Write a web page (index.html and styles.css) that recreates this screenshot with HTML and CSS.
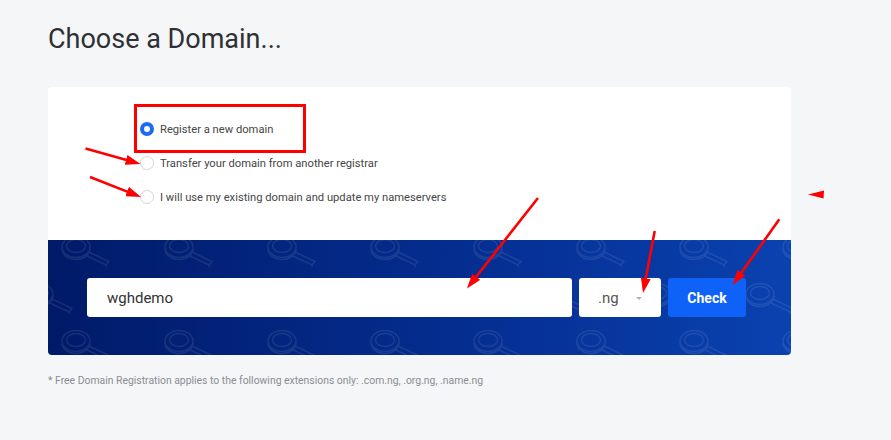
FILE: index.html
```html
<!DOCTYPE html>
<html lang="en">
<head>
    <meta charset="UTF-8">
    <meta name="viewport" content="width=device-width, initial-scale=1.0">
    <title>Choose a Domain</title>
    <link rel="stylesheet" href="styles.css">
</head>
<body>
    <div class="page">
        <h1 class="page-title">Choose a Domain...</h1>

        <div class="domain-card">
            <div class="domain-options">
                <label class="option">
                    <input type="radio" name="domain_option" value="register" checked>
                    Register a new domain
                </label>
                <label class="option">
                    <input type="radio" name="domain_option" value="transfer">
                    Transfer your domain from another registrar
                </label>
                <label class="option">
                    <input type="radio" name="domain_option" value="owndomain">
                    I will use my existing domain and update my nameservers
                </label>
            </div>

            <div class="domain-search">
                <!-- magnifier background pattern -->
                <svg class="search-pattern" width="100%" height="100%">
                    <defs>
                        <g id="magnifier" fill="none" stroke="#fff" stroke-width="1.4">
                            <ellipse cx="15" cy="11" rx="14" ry="10.5"/>
                            <ellipse cx="15" cy="10" rx="9.5" ry="6.5"/>
                            <path d="M1 13 A14 10.5 0 0 0 29 13"/>
                            <path d="M24 19 L45 29 L48 25.5 L27 15.5"/>
                            <path d="M45 29 L45.5 31"/>
                        </g>
                        <pattern id="lenses" x="13" y="-4" width="103" height="94" patternUnits="userSpaceOnUse">
                            <use href="#magnifier" x="0" y="0"/>
                            <use href="#magnifier" x="66" y="47"/>
                            <use href="#magnifier" x="-37" y="47"/>
                        </pattern>
                    </defs>
                    <rect width="100%" height="100%" fill="url(#lenses)" opacity="0.09"/>
                </svg>

                <form class="search-row" onsubmit="event.preventDefault()">
                    <input type="text" class="domain-input" name="domain" value="wghdemo">
                    <div class="tld-select">
                        <span>.ng</span>
                        <span class="caret"></span>
                    </div>
                    <button type="submit" class="check-btn">Check</button>
                </form>
            </div>
        </div>

        <p class="footnote">* Free Domain Registration applies to the following extensions only: .com.ng, .org.ng, .name.ng</p>
    </div>

    <!-- red annotation marks drawn over the screenshot -->
    <svg class="annotations" width="891" height="440">
        <defs>
            <marker id="head" markerWidth="15" markerHeight="10" refX="7" refY="5" orient="auto" markerUnits="userSpaceOnUse">
                <path d="M0 0 L15 5 L0 10 z" fill="#f00"/>
            </marker>
        </defs>
        <rect x="135.5" y="105.5" width="169" height="46" fill="none" stroke="#f00" stroke-width="3"/>
        <g stroke="#f00" stroke-width="2.6" marker-end="url(#head)">
            <line x1="85.5" y1="148.5" x2="132.8" y2="161.8"/>
            <line x1="90" y1="177" x2="133.6" y2="194.1"/>
            <line x1="538" y1="198" x2="471.9" y2="282.2"/>
            <line x1="654.7" y1="231" x2="644.5" y2="285.1"/>
            <line x1="779.3" y1="219.3" x2="737.3" y2="278.5"/>
        </g>
        <polygon points="808,194.5 824,190.5 823.5,198.5" fill="#f00"/>
    </svg>
</body>
</html>
```

FILE: styles.css
```css
body {
    margin: 0;
    background-color: #f5f6f8;
    font-family: Roboto, "Noto Sans", Arial, sans-serif;
}

.page {
    width: 743px;
    padding-left: 48px;
}

.page-title {
    margin: 0 0 31px;
    padding-top: 22px;
    font-size: 27px;
    line-height: 34px;
    font-weight: 400;
    color: #2e3034;
}

.domain-card {
    background-color: #fff;
    border-radius: 4px;
    overflow: hidden;
}

.domain-options {
    display: flex;
    flex-direction: column;
    padding: 25px 0 26px 92px;
}

.option {
    display: flex;
    align-items: center;
    gap: 6px;
    height: 34px;
    font-size: 11.2px;
    color: #464646;
}

.option input[type="radio"] {
    appearance: none;
    -webkit-appearance: none;
    box-sizing: border-box;
    width: 14px;
    height: 14px;
    margin: 0;
    border: 1px solid #d6d6d6;
    border-radius: 50%;
    background-color: #fff;
}

.option input[type="radio"]:checked {
    border: 4px solid #1a6cf3;
}

.domain-search {
    position: relative;
    box-sizing: border-box;
    height: 115px;
    padding: 38px 45px 0 39px;
    background: linear-gradient(90deg, #001a68 0%, #052f93 60%, #0a42b0 100%);
}

.search-pattern {
    position: absolute;
    top: 0;
    left: 0;
}

.search-row {
    position: relative;
    display: flex;
    gap: 7px;
    height: 39px;
}

.domain-input {
    flex: 1;
    border: none;
    border-radius: 3px;
    padding: 0 20px;
    font-family: inherit;
    font-size: 15px;
    color: #333;
    outline: none;
}

.tld-select {
    display: flex;
    align-items: center;
    justify-content: space-between;
    width: 82px;
    box-sizing: border-box;
    padding: 0 19px;
    background-color: #fff;
    border-radius: 3px;
    font-size: 15px;
    color: #555;
}

.caret {
    width: 0;
    height: 0;
    margin-top: 2px;
    border-left: 3px solid transparent;
    border-right: 3px solid transparent;
    border-top: 3px solid #b3b3b3;
}

.check-btn {
    width: 78px;
    border: none;
    border-radius: 3px;
    background-color: #0f62f7;
    color: #fff;
    font-family: inherit;
    font-size: 14px;
    font-weight: bold;
    cursor: pointer;
}

.footnote {
    margin: 19px 0 0;
    font-size: 10.4px;
    line-height: 14px;
    color: #8b8d92;
}

.annotations {
    position: absolute;
    top: 0;
    left: 0;
    pointer-events: none;
}
```
